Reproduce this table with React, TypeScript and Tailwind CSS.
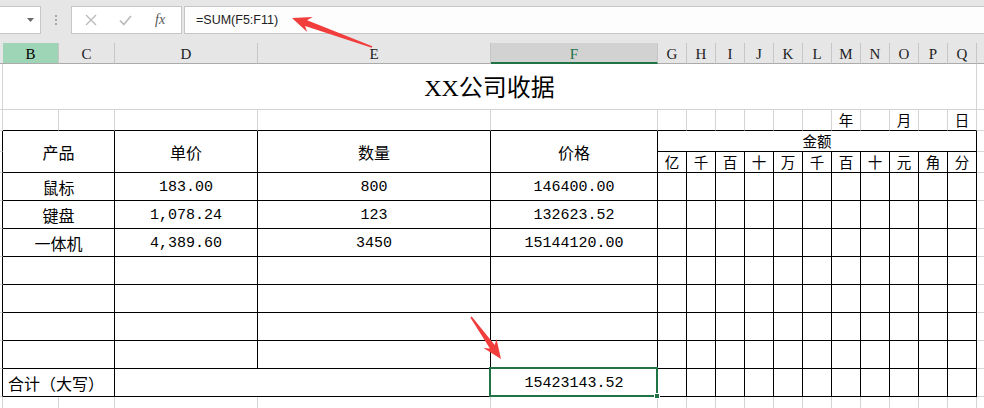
import React from 'react';

const colLetters = ['B', 'C', 'D', 'E', 'F', 'G', 'H', 'I', 'J', 'K', 'L', 'M', 'N', 'O', 'P', 'Q'];
const units = ['亿', '千', '百', '十', '万', '千', '百', '十', '元', '角', '分'];
const rows = [
  ['鼠标', '183.00', '800', '146400.00'],
  ['键盘', '1,078.24', '123', '132623.52'],
  ['一体机', '4,389.60', '3450', '15144120.00'],
  ['', '', '', ''],
  ['', '', '', ''],
  ['', '', '', ''],
  ['', '', '', ''],
];
const dateRow = ['', '', '', '', '', '', '', '', '', '', '', '年', '', '月', '', '日'];

const dark = 'border-r border-b border-r-black border-b-black';
const lightDarkB = 'border-r border-b border-r-[#d4d4d4] border-b-black';
const light = 'border-r border-b border-r-[#d4d4d4] border-b-[#d4d4d4]';
const cjk = "font-['Noto_Sans_CJK_SC',sans-serif] text-[16px] leading-none";
const cjkSmall = "font-['Noto_Sans_CJK_SC',sans-serif] text-[14.5px] leading-none";
const mono = "font-['Liberation_Mono','Noto_Sans_CJK_SC',monospace] text-[15px] leading-none";
const center = 'flex items-center justify-center';

const Toolbar: React.FC = () => (
  <div className="h-[43px] bg-[#e6e6e6] flex items-start pt-[6px]">
    <div className="w-[41px] h-[28px] bg-white border border-l-0 border-[#c6c6c6] flex items-center justify-end pr-[6px]">
      <svg width="7" height="4" viewBox="0 0 7 4">
        <path d="M0 0 L7 0 L3.5 4 Z" fill="#6a6a6a" />
      </svg>
    </div>
    <div className="w-[30px] h-[28px] flex flex-col items-center justify-center gap-[2px]">
      <div className="w-[2px] h-[2px] bg-[#a8a8a8]" />
      <div className="w-[2px] h-[2px] bg-[#a8a8a8]" />
      <div className="w-[2px] h-[2px] bg-[#a8a8a8]" />
    </div>
    <div className="w-[111px] h-[28px] bg-white border border-[#c6c6c6] flex items-center">
      <svg width="12" height="12" viewBox="0 0 12 12" className="ml-[13px]">
        <path d="M1 1 L11 11 M11 1 L1 11" stroke="#bcbcbc" strokeWidth="1.4" />
      </svg>
      <svg width="13" height="11" viewBox="0 0 13 11" className="ml-[22px]">
        <path d="M1 5.5 L4.8 9.5 L12 1" stroke="#bcbcbc" strokeWidth="1.8" fill="none" />
      </svg>
      <span className="ml-[23px] font-['Liberation_Serif',serif] italic text-[14px] text-[#555] leading-none">fx</span>
    </div>
    <div className="ml-[2px] flex-1 h-[28px] bg-[#fdfdfd] border border-r-0 border-[#c6c6c6] flex items-center pl-[11px]">
      <span className="font-['Liberation_Sans',sans-serif] text-[12.5px] text-[#222]">=SUM(F5:F11)</span>
    </div>
  </div>
);

const Sheet: React.FC = () => (
  <div className="h-[365px] grid grid-cols-[3px_56px_56px_143px_233px_167px_repeat(11,29px)_1fr] grid-rows-[21px_46px_21px_21px_21px_repeat(8,28px)_1fr] text-black">
    {/* column letters */}
    <div className="bg-[#e6e6e6] border-b border-b-[#ababab]" />
    {colLetters.map((c) => {
      if (c === 'B')
        return (
          <div key={c} className={`bg-[#9fd5b7] border-r border-b border-r-[#c6c6c6] border-b-[#ababab] ${center} font-['Liberation_Serif',serif] text-[15px] pt-[2px]`}>
            {c}
          </div>
        );
      if (c === 'F')
        return (
          <div key={c} className={`bg-[#d2d2d2] border-r border-b-2 border-r-[#c6c6c6] border-b-[#217346] text-[#217346] ${center} font-['Liberation_Serif',serif] text-[15px] pt-[3px]`}>
            {c}
          </div>
        );
      return (
        <div key={c} className={`bg-[#e6e6e6] border-r border-b border-r-[#c6c6c6] border-b-[#ababab] ${center} font-['Liberation_Serif',serif] text-[15px] text-[#222] pt-[2px]`}>
          {c}
        </div>
      );
    })}
    <div className="bg-[#e6e6e6] border-b border-b-[#ababab]" />

    {/* title */}
    <div className={light} />
    <div className={`col-span-16 ${light} ${center} font-['Liberation_Serif','Noto_Sans_CJK_SC',serif] text-[24px] pt-[2px]`}>
      XX公司收据
    </div>
    <div className="border-b border-b-[#d4d4d4]" />

    {/* date row */}
    <div className={light} />
    {dateRow.map((t, i) => (
      <div key={i} className={`${lightDarkB} ${center} ${cjkSmall}`}>
        {t}
      </div>
    ))}
    <div className="border-b border-b-[#d4d4d4]" />

    {/* table header */}
    <div className="border-r border-b border-r-black border-b-[#d4d4d4]" />
    <div className={`col-span-2 row-span-2 ${dark} ${center} ${cjk}`}>产品</div>
    <div className={`row-span-2 ${dark} ${center} ${cjk}`}>单价</div>
    <div className={`row-span-2 ${dark} ${center} ${cjk}`}>数量</div>
    <div className={`row-span-2 ${dark} ${center} ${cjk}`}>价格</div>
    <div className={`col-span-11 ${dark} ${center} ${cjkSmall}`}>金额</div>
    <div className="border-b border-b-[#d4d4d4]" />
    <div className="border-r border-b border-r-black border-b-[#d4d4d4]" />
    {units.map((u, i) => (
      <div key={i} className={`${dark} ${center} ${cjkSmall}`}>
        {u}
      </div>
    ))}
    <div className="border-b border-b-[#d4d4d4]" />

    {/* data rows */}
    {rows.map((r, ri) => (
      <React.Fragment key={ri}>
        <div className="border-r border-b border-r-black border-b-[#d4d4d4]" />
        <div className={`col-span-2 ${dark} ${center} ${cjk} pt-[1px]`}>{r[0]}</div>
        <div className={`${dark} ${center} ${mono} pt-[2px]`}>{r[1]}</div>
        <div className={`${dark} ${center} ${mono} pt-[2px]`}>{r[2]}</div>
        <div className={`${dark} ${center} ${mono} pt-[2px]`}>{r[3]}</div>
        {units.map((_, i) => (
          <div key={i} className={dark} />
        ))}
        <div className="border-b border-b-[#d4d4d4]" />
      </React.Fragment>
    ))}

    {/* total row */}
    <div className="border-r border-b border-r-black border-b-[#d4d4d4]" />
    <div className={`col-span-2 ${dark} flex items-center pl-[5px] ${cjk} pt-[1px]`}>合计（大写）</div>
    <div className={`col-span-2 ${dark}`} />
    <div className={`relative ${dark} ${center} ${mono} pt-[2px]`}>
      15423143.52
      <div className="absolute -left-[2px] -top-[2px] -right-[1px] -bottom-[1px] border-2 border-[#217346]" />
      <div className="absolute -right-[3px] -bottom-[3px] w-[6px] h-[6px] bg-[#217346] border border-white" />
    </div>
    {units.map((_, i) => (
      <div key={i} className={dark} />
    ))}
    <div className="border-b border-b-[#d4d4d4]" />

    {/* partial row below */}
    <div className="border-r border-r-[#d4d4d4]" />
    {colLetters.map((c) => (
      <div key={c} className="border-r border-r-[#d4d4d4]" />
    ))}
    <div />
  </div>
);

const Arrows: React.FC = () => (
  <svg className="absolute left-0 top-0 pointer-events-none" width="984" height="408" viewBox="0 0 984 408">
    <polygon
      points="292,18 312.6,17 307.1,20.3 372.3,46.2 371.7,47.8 305.1,25.9 307.2,32"
      fill="#f23d3d"
    />
    <polygon
      points="501,359 483.5,348.1 489.9,348.5 470.3,317.5 471.7,316.5 494.7,345.1 496.5,338.9"
      fill="#f23d3d"
    />
  </svg>
);

const App: React.FC = () => {
  return (
    <div className="relative w-[984px] h-[408px] overflow-hidden bg-white">
      <Toolbar />
      <Sheet />
      <Arrows />
    </div>
  );
};

export default App;
